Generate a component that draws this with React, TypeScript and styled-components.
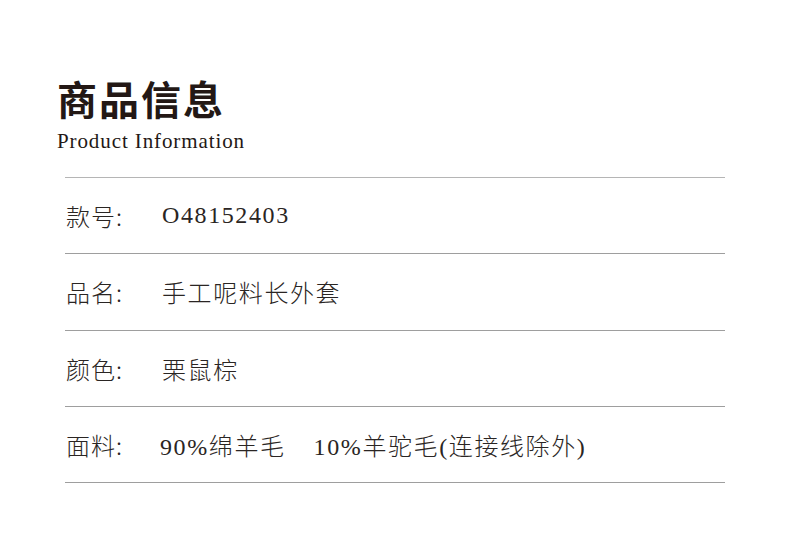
import {createGlobalStyle, styled} from "styled-components";

const GlobalStyle = createGlobalStyle`
    html, body {
        margin: 0;
        padding: 0;
        background: #ffffff;
    }
`;

const Page = styled.div`
    width: 790px;
    height: 543px;
    box-sizing: border-box;
    padding: 78px 0 0 57px;
    background: #ffffff;
    color: #231815;
    font-family: "Liberation Serif", "Noto Sans CJK SC", serif;
`;

const Title = styled.h1`
    margin: 0;
    font-family: "Noto Sans CJK SC", sans-serif;
    font-size: 40px;
    line-height: 40px;
    font-weight: 700;
    letter-spacing: 2px;
`;

const Subtitle = styled.div`
    margin-top: 13px;
    font-size: 21px;
    line-height: 20px;
    letter-spacing: 0.9px;
`;

const Table = styled.div`
    margin: 26px 0 0 8px;
    width: 660px;
    border-top: 1px solid #b5b5b5;
`;

const Row = styled.div`
    display: flex;
    align-items: center;
    height: 75.25px;
    border-bottom: 1px solid #9e9e9e;
    font-size: 24px;
    color: #2a2523;
`;

const Label = styled.span`
    width: 96px;
    padding-left: 1px;
    font-family: "Noto Sans CJK SC", sans-serif;
    font-weight: 300;
    letter-spacing: 1px;
`;

const Value = styled.span<{ $shift?: number; }>`
    margin-left: ${({$shift}) => $shift ?? 0}px;
    font-family: "Liberation Serif", "Noto Sans CJK SC", serif;
    font-weight: 300;
    letter-spacing: 1.6px;
`;

const Gap = styled.span`
    display: inline-block;
    width: 28px;
`;

function App() {
    return (
        <Page>
            <GlobalStyle/>
            <Title>商品信息</Title>
            <Subtitle>Product Information</Subtitle>
            <Table>
                <Row>
                    <Label>款号:</Label>
                    <Value>O48152403</Value>
                </Row>
                <Row>
                    <Label>品名:</Label>
                    <Value>手工呢料长外套</Value>
                </Row>
                <Row>
                    <Label>颜色:</Label>
                    <Value>栗鼠棕</Value>
                </Row>
                <Row>
                    <Label>面料:</Label>
                    <Value $shift={-2}>90%绵羊毛<Gap/>10%羊驼毛(连接线除外)</Value>
                </Row>
            </Table>
        </Page>
    );
}

export default App;
